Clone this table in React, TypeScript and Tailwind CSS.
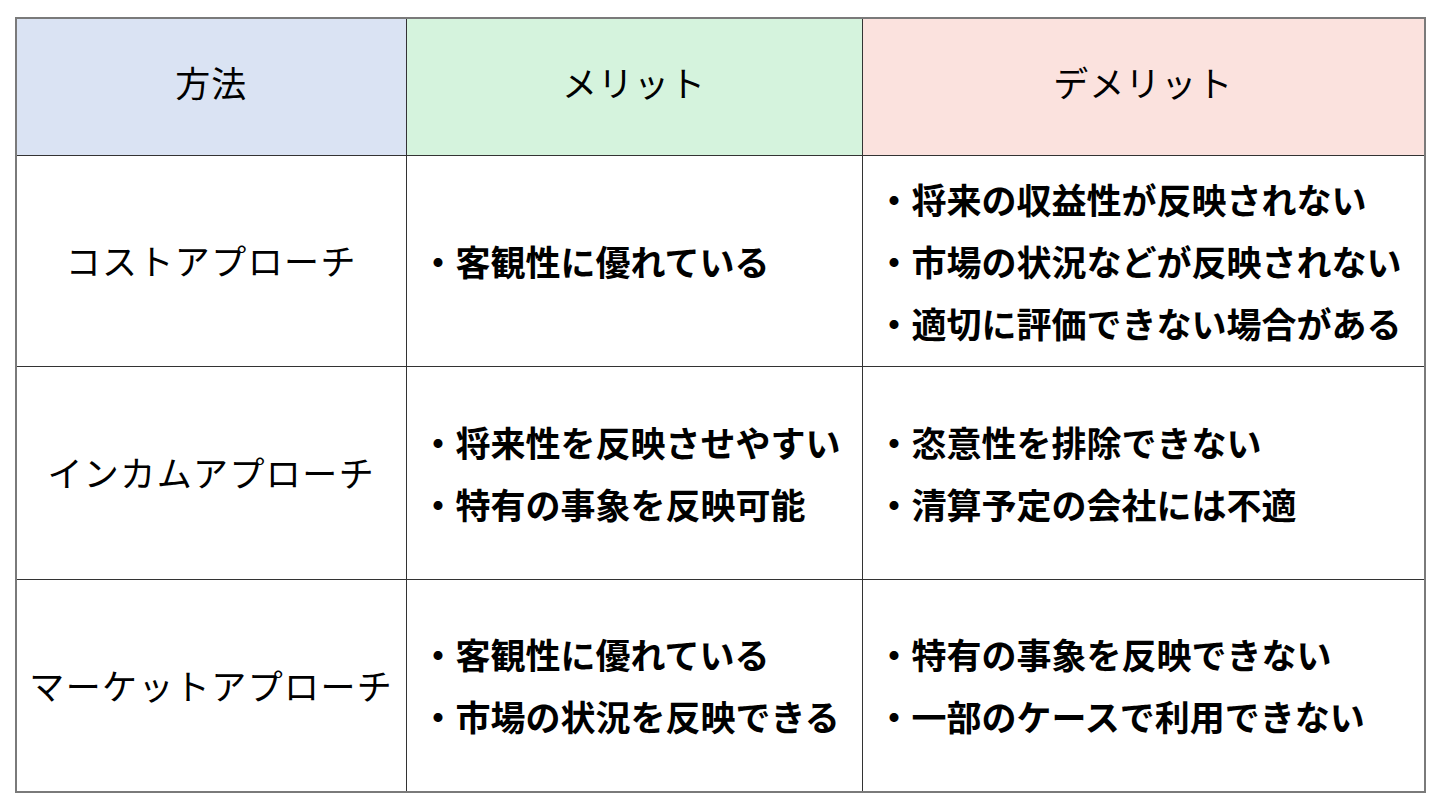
import React from "react";

interface Row {
  method: string;
  merits: string[];
  demerits: string[];
}

const rows: Row[] = [
  {
    method: "コストアプローチ",
    merits: ["・客観性に優れている"],
    demerits: [
      "・将来の収益性が反映されない",
      "・市場の状況などが反映されない",
      "・適切に評価できない場合がある",
    ],
  },
  {
    method: "インカムアプローチ",
    merits: ["・将来性を反映させやすい", "・特有の事象を反映可能"],
    demerits: ["・恣意性を排除できない", "・清算予定の会社には不適"],
  },
  {
    method: "マーケットアプローチ",
    merits: ["・客観性に優れている", "・市場の状況を反映できる"],
    demerits: ["・特有の事象を反映できない", "・一部のケースで利用できない"],
  },
];

const font = { fontFamily: '"Noto Sans CJK JP", "Noto Sans", sans-serif' };

// bullet list inside a body cell
const Lines: React.FC<{ items: string[] }> = ({ items }) => (
  <div className="flex flex-col">
    {items.map((t, i) => (
      <div key={i} className="whitespace-nowrap leading-[62px] font-bold">
        {t}
      </div>
    ))}
  </div>
);

export default function App() {
  return (
    <div className="w-[1440px] h-[810px] bg-white pt-[17px] pl-[15px]" style={font}>
      <table className="border-collapse border-2 border-[#7a7a7a] text-[35px] text-black table-fixed w-[1409px]">
        <colgroup>
          <col className="w-[390px]" />
          <col className="w-[456px]" />
          <col className="w-[563px]" />
        </colgroup>
        <thead>
          <tr className="h-[137px]">
            <th className="border border-[#333] bg-[#dae3f3] font-normal text-center pb-[10px] tracking-[1px]">方法</th>
            <th className="border border-[#333] bg-[#d5f3dd] font-normal text-center pb-[10px] tracking-[1px]">メリット</th>
            <th className="border border-[#333] bg-[#fbe2de] font-normal text-center pb-[10px] tracking-[1px]">デメリット</th>
          </tr>
        </thead>
        <tbody>
          {rows.map((r, i) => (
            <tr key={i} className={i === 0 ? "h-[211px]" : "h-[213px]"}>
              <td className="border border-[#333] text-center whitespace-nowrap tracking-[1.4px]">{r.method}</td>
              <td className="border border-[#333] pl-[14px] align-middle">
                <Lines items={r.merits} />
              </td>
              <td className="border border-[#333] pl-[14px] align-middle">
                <Lines items={r.demerits} />
              </td>
            </tr>
          ))}
        </tbody>
      </table>
    </div>
  );
}
